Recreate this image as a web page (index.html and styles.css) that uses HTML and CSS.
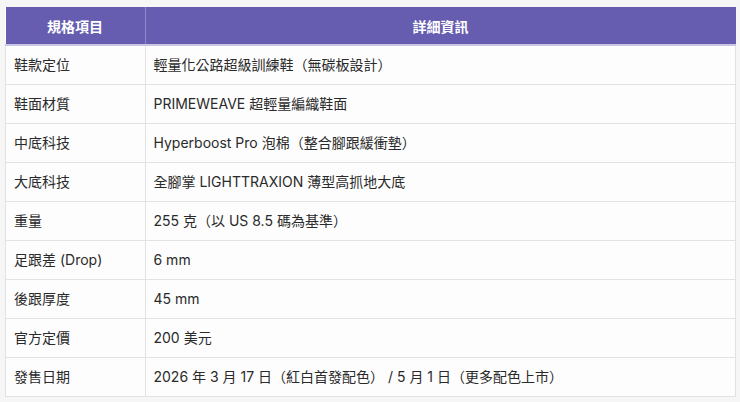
FILE: index.html
```html
<!DOCTYPE html>
<html lang="zh-Hant">
<head>
<meta charset="utf-8">
<link rel="stylesheet" href="styles.css">
</head>
<body>
<table class="spec">
  <thead>
    <tr><th class="c1">規格項目</th><th>詳細資訊</th></tr>
  </thead>
  <tbody>
    <tr><td>鞋款定位</td><td>輕量化公路超級訓練鞋（無碳板設計）</td></tr>
    <tr><td>鞋面材質</td><td>PRIMEWEAVE 超輕量編織鞋面</td></tr>
    <tr><td>中底科技</td><td>Hyperboost Pro 泡棉（整合腳跟緩衝墊）</td></tr>
    <tr><td>大底科技</td><td>全腳掌 LIGHTTRAXION 薄型高抓地大底</td></tr>
    <tr><td>重量</td><td>255 克（以 US 8.5 碼為基準）</td></tr>
    <tr><td>足跟差 (Drop)</td><td>6 mm</td></tr>
    <tr><td>後跟厚度</td><td>45 mm</td></tr>
    <tr><td>官方定價</td><td>200 美元</td></tr>
    <tr><td>發售日期</td><td>2026 年 3 月 17 日（紅白首發配色） / 5 月 1 日（更多配色上市）</td></tr>
  </tbody>
</table>
</body>
</html>
```
FILE: styles.css
```css
html, body {
  margin: 0;
  background: #f6f6f6;
}
body {
  padding: 7px 5px;
  font-family: "Inter", "Noto Sans CJK TC", sans-serif;
  font-size: 14px;
  color: #2a2a2a;
}
.spec {
  width: 731px;
  border-collapse: collapse;
  background: #fdfdfd;
}
.spec th {
  background: #665db0;
  color: #fff;
  font-weight: 700;
  height: 37px;
  padding: 0 8px;
  text-align: center;
  border-left: 1px solid #8f88cc;
  border-bottom: 2px solid #c9c6e3;
}
.spec th.c1 { width: 123px; border-left: none; }
.spec td {
  height: 38px;
  padding: 0 8px;
  line-height: 20px;
  border: 1px solid #e2e2e2;
  border-top: none;
}
.spec td:first-child { border-left: 1px solid #e2e2e2; }
```
